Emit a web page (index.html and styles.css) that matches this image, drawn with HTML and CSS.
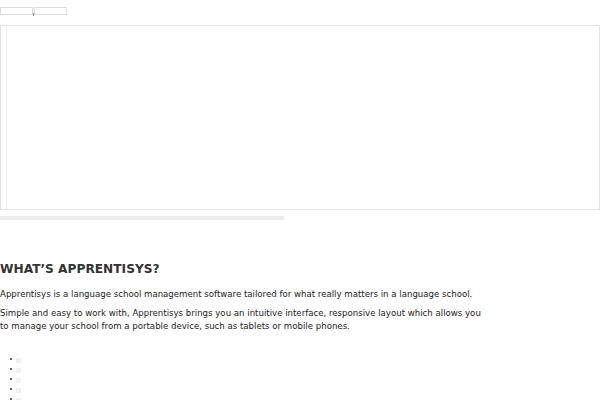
FILE: index.html
```html
<!DOCTYPE html>
<html lang="en">

<head>
    <meta charset="UTF-8">
    <meta name="viewport" content="width=device-width, initial-scale=1.0">
    <title>Apprentisys</title>
    <link rel="stylesheet" href="styles.css">
</head>

<body>
    <div class="toolbar">
        <button class="tab"></button><span class="caret"></span><button class="tab"></button>
    </div>

    <div class="slider">
        <div class="slide"></div>
    </div>
    <div class="progress"></div>

    <section class="about">
        <h2>What’s Apprentisys?</h2>
        <p>Apprentisys is a language school management software tailored for what really matters in a language school.</p>
        <p>Simple and easy to work with, Apprentisys brings you an intuitive interface, responsive layout which allows you<br>
            to manage your school from a portable device, such as tablets or mobile phones.</p>
    </section>

    <ul class="dots">
        <li><a href="#"></a></li>
        <li><a href="#"></a></li>
        <li><a href="#"></a></li>
        <li><a href="#"></a></li>
        <li><a href="#"></a></li>
    </ul>
</body>

</html>
```

FILE: styles.css
```css
body {
    font-family: "DejaVu Sans", sans-serif;
    color: #222;
    background: white;
    margin: 0;
    padding: 0;
}

.toolbar {
    display: flex;
    align-items: flex-start;
    padding-top: 7px;
    height: 18px;
}

.tab {
    width: 33px;
    height: 8px;
    padding: 0;
    background: white;
    border: 1px solid #ddd;
    border-radius: 0;
}

.caret {
    width: 1px;
    height: 3px;
    margin-top: 6px;
    background: #888;
}

.slider {
    height: 183px;
    border: 1px solid #e4e4e4;
    padding-left: 5px;
}

.slide {
    height: 100%;
    border-left: 1px solid #eee;
}

.progress {
    width: 284px;
    height: 4px;
    margin-top: 6px;
    background: #ececec;
}

.about {
    padding-top: 42px;
}

.about h2 {
    font-size: 12.2px;
    text-transform: uppercase;
    margin: 0 0 12px;
    color: #333;
}

.about p {
    font-size: 8.6px;
    line-height: 13px;
    margin: 0 0 6px;
    color: #222;
}

.dots {
    list-style: none;
    margin: 21px 0 0;
    padding-left: 10px;
}

.dots li {
    display: flex;
    align-items: center;
    gap: 4px;
    height: 10px;
}

.dots li::before {
    content: "";
    width: 2px;
    height: 2px;
    border-radius: 50%;
    background: #333;
}

.dots a {
    width: 5px;
    height: 5px;
    margin-top: 2px;
    background: #f0f0f0;
}
```
